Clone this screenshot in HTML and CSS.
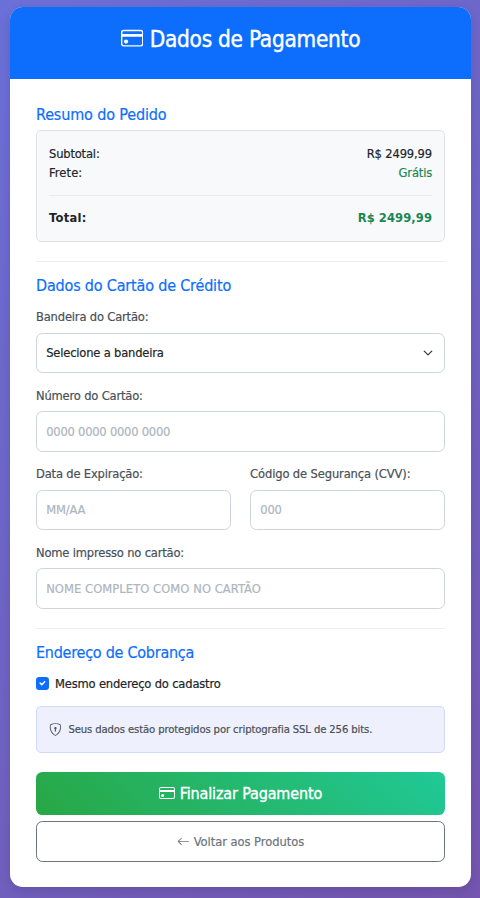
FILE: index.html
```
<!DOCTYPE html>
<html lang="pt-BR">
<head>
<meta charset="utf-8">
<title>Dados de Pagamento</title>
<link rel="stylesheet" href="styles.css">
</head>
<body>
<svg class="sprite" aria-hidden="true">
  <symbol id="credit-card" viewBox="0 0 16 16">
    <path d="M0 4a2 2 0 0 1 2-2h12a2 2 0 0 1 2 2v8a2 2 0 0 1-2 2H2a2 2 0 0 1-2-2V4zm2-1a1 1 0 0 0-1 1v1h14V4a1 1 0 0 0-1-1H2zm13 4H1v5a1 1 0 0 0 1 1h12a1 1 0 0 0 1-1V7z"/>
    <circle cx="3.6" cy="10.4" r="1.5"/>
  </symbol>
</svg>
<main class="card">
  <header class="card-header">
    <h1><svg class="icon icon-title"><use href="#credit-card"/></svg><span>Dados de Pagamento</span></h1>
  </header>
  <form class="card-body">
    <h2 class="h-summary">Resumo do Pedido</h2>
    <section class="summary">
      <div class="row"><span>Subtotal:</span><span class="price">R$ 2499,99</span></div>
      <div class="row"><span class="shipping">Frete:</span><span class="green">Grátis</span></div>
      <hr>
      <div class="row total"><span class="total-label">Total:</span><span class="green">R$ 2499,99</span></div>
    </section>
    <hr class="divider">
    <h2 class="h-card">Dados do Cartão de Crédito</h2>
    <div class="field">
      <label for="brand">Bandeira do Cartão:</label>
      <div class="control select" id="brand"><span>Selecione a bandeira</span>
        <svg class="chevron" viewBox="0 0 16 16"><path d="m2 5 6 6 6-6"/></svg>
      </div>
    </div>
    <div class="field">
      <label for="number">Número do Cartão:</label>
      <input class="control digits" id="number" placeholder="0000 0000 0000 0000">
    </div>
    <div class="columns">
      <div class="field">
        <label for="expiry">Data de Expiração:</label>
        <input class="control" id="expiry" placeholder="MM/AA">
      </div>
      <div class="field">
        <label for="cvv" class="cvv">Código de Segurança (CVV):</label>
        <input class="control digits" id="cvv" placeholder="000">
      </div>
    </div>
    <div class="field">
      <label for="name">Nome impresso no cartão:</label>
      <input class="control caps" id="name" placeholder="NOME COMPLETO COMO NO CARTÃO">
    </div>
    <hr class="divider">
    <h2 class="h-billing">Endereço de Cobrança</h2>
    <label class="check">
      <span class="box"><svg viewBox="0 0 20 20"><path d="m6.5 9.5 2.5 2.5 4.5-4.5"/></svg></span>
      <span>Mesmo endereço do cadastro</span>
    </label>
    <div class="notice">
      <svg class="icon icon-shield" viewBox="0 0 16 16"><path d="M5.338 1.59a61.44 61.44 0 0 0-2.837.856.481.481 0 0 0-.328.39c-.554 4.157.726 7.19 2.253 9.188a10.725 10.725 0 0 0 2.287 2.233c.346.244.652.42.893.533.12.057.218.095.293.118a.55.55 0 0 0 .101.025.615.615 0 0 0 .1-.025c.076-.023.174-.061.294-.118.24-.113.547-.29.893-.533a10.726 10.726 0 0 0 2.287-2.233c1.527-1.997 2.807-5.031 2.253-9.188a.48.48 0 0 0-.328-.39c-.651-.213-1.75-.56-2.837-.855C9.552 1.29 8.531 1.067 8 1.067c-.53 0-1.552.223-2.662.524zM5.072.56C6.157.265 7.31 0 8 0s1.843.265 2.928.56c1.11.3 2.229.655 2.887.87a1.54 1.54 0 0 1 1.044 1.262c.596 4.477-.787 7.795-2.465 9.99a11.775 11.775 0 0 1-2.517 2.453 7.159 7.159 0 0 1-1.048.625c-.28.132-.581.24-.829.24s-.548-.108-.829-.24a7.158 7.158 0 0 1-1.048-.625 11.777 11.777 0 0 1-2.517-2.453C1.928 10.487.545 7.169 1.141 2.692A1.54 1.54 0 0 1 2.185 1.43 62.456 62.456 0 0 1 5.072.56z"/><path d="M9.5 6.5a1.5 1.5 0 0 1-1 1.415l.385 1.99a.5.5 0 0 1-.491.595h-.788a.5.5 0 0 1-.49-.595l.384-1.99a1.5 1.5 0 1 1 2-1.415z"/></svg>
      <span>Seus dados estão protegidos por criptografia SSL de 256 bits.</span>
    </div>
    <button type="button" class="btn pay"><svg class="icon icon-pay"><use href="#credit-card"/></svg><span>Finalizar Pagamento</span></button>
    <button type="button" class="btn back"><svg class="icon icon-back" viewBox="0 0 16 16"><path d="M15 8a.5.5 0 0 0-.5-.5H2.707l3.147-3.146a.5.5 0 1 0-.708-.708l-4 4a.5.5 0 0 0 0 .708l4 4a.5.5 0 0 0 .708-.708L2.707 8.5H14.5A.5.5 0 0 0 15 8z"/></svg><span>Voltar aos Produtos</span></button>
  </form>
</main>
</body>
</html>
```
FILE: styles.css
```
* { box-sizing: border-box; }

html { height: 100%; }

body {
  margin: 0;
  min-height: 100%;
  padding: 7px 9px 11px 10px;
  background: linear-gradient(135deg, #6b70d8 0%, #7456b0 100%);
  color: #212529;
  font: 12.8px/19.2px "DejaVu Sans Condensed", "DejaVu Sans", sans-serif;
  letter-spacing: -0.17px;
  -webkit-text-stroke: .2px currentColor;
}

.sprite { position: absolute; width: 0; height: 0; }

.icon { flex: none; fill: currentColor; }

.card {
  height: 880px;
  border-radius: 12.8px;
  background: #fff;
  box-shadow: 0 4px 12px rgba(0, 0, 0, .12);
  overflow: hidden;
}

.card-header {
  height: 72px;
  padding-top: 19px;
  background: #0d6efd;
  color: #fff;
}

h1 {
  display: flex;
  justify-content: center;
  gap: 6.6px;
  margin: 0;
  font-size: 22.4px;
  line-height: 27px;
  font-weight: 400;
  letter-spacing: -0.25px;
  -webkit-text-stroke-width: .4px;
}

.icon-title { width: 22.4px; height: 22.4px; margin-top: 1px; }

.card-body { padding: 25.6px 26px; }

h2 {
  margin: 0;
  color: #0d6efd;
  font-size: 16px;
  line-height: 19.2px;
  font-weight: 400;
}

.h-summary { margin-bottom: 6.2px; letter-spacing: -0.14px; }
.h-card { margin-bottom: 11.8px; letter-spacing: -0.18px; }
.h-billing { margin-bottom: 11.8px; letter-spacing: -0.25px; }

.summary {
  height: 112px;
  padding: 12.8px 12px;
  border: 1px solid #dee2e6;
  border-radius: 5px;
  background: #f8f9fa;
}

.row { display: flex; justify-content: space-between; }
.price { letter-spacing: -0.12px; }
.shipping { letter-spacing: .1px; }
.green { color: #198754; }
.total { font-weight: 700; letter-spacing: .1px; -webkit-text-stroke: 0; }
.total-label { letter-spacing: .3px; }

hr { height: 1px; margin: 12.4px 0; border: 0; background: #e9ebee; }
.divider { margin: 19px 0 14.2px; background: #edeeef; }

.field { min-width: 0; margin-bottom: 12.8px; }

.field label {
  display: block;
  height: 19.2px;
  margin-bottom: 6.3px;
  color: #495057;
}

.field .cvv { letter-spacing: -0.12px; }

.control {
  display: block;
  width: 100%;
  height: 40.3px;
  padding: 0 9.2px;
  border: 1px solid #ced4da;
  border-radius: 6.4px;
  background: #fff;
  color: #212529;
  font: inherit;
  letter-spacing: -0.18px;
}

.control::placeholder { color: #adb5bd; opacity: 1; }
.digits { letter-spacing: -0.22px; }
.caps { letter-spacing: .07px; }

.select { display: flex; align-items: center; justify-content: space-between; }

.chevron {
  width: 10px;
  height: 10px;
  margin-right: 1.6px;
  fill: none;
  stroke: #343a40;
  stroke-width: 2;
  stroke-linecap: round;
  stroke-linejoin: round;
}

.columns { display: grid; grid-template-columns: 1fr 1fr; gap: 19.2px; }

.check { display: flex; align-items: center; gap: 6.2px; height: 19.2px; }

.box {
  display: block;
  width: 12.8px;
  height: 12.8px;
  border-radius: 3.2px;
  background: #0d6efd;
}

.box svg {
  display: block;
  width: 12.8px;
  height: 12.8px;
  fill: none;
  stroke: #fff;
  stroke-width: 2.4;
  stroke-linecap: round;
  stroke-linejoin: round;
}

.notice {
  display: flex;
  align-items: center;
  gap: 6.2px;
  height: 47px;
  margin: 12.6px 0 19px;
  padding: 0 12.4px;
  border: 1px solid #d1dafc;
  border-radius: 5px;
  background: #eef0fd;
  color: #495057;
  font-size: 11.2px;
  letter-spacing: -0.12px;
}

.icon-shield { width: 12.8px; height: 12.8px; }

.btn {
  display: flex;
  align-items: center;
  justify-content: center;
  width: 100%;
  padding: 0;
  border: 0;
  border-radius: 6.4px;
  font: inherit;
}

.pay {
  gap: 4.8px;
  height: 43px;
  margin-bottom: 6.4px;
  background: linear-gradient(45deg, #28a745, #20c997);
  color: #fff;
  font-size: 16px;
  letter-spacing: -0.14px;
  -webkit-text-stroke-width: .35px;
}

.icon-pay { width: 16px; height: 16px; }

.back {
  gap: 4px;
  height: 41px;
  border: 1px solid #6c757d;
  background: #fff;
  color: #6c757d;
  letter-spacing: -0.04px;
}

.icon-back { width: 12.8px; height: 12.8px; }
```
